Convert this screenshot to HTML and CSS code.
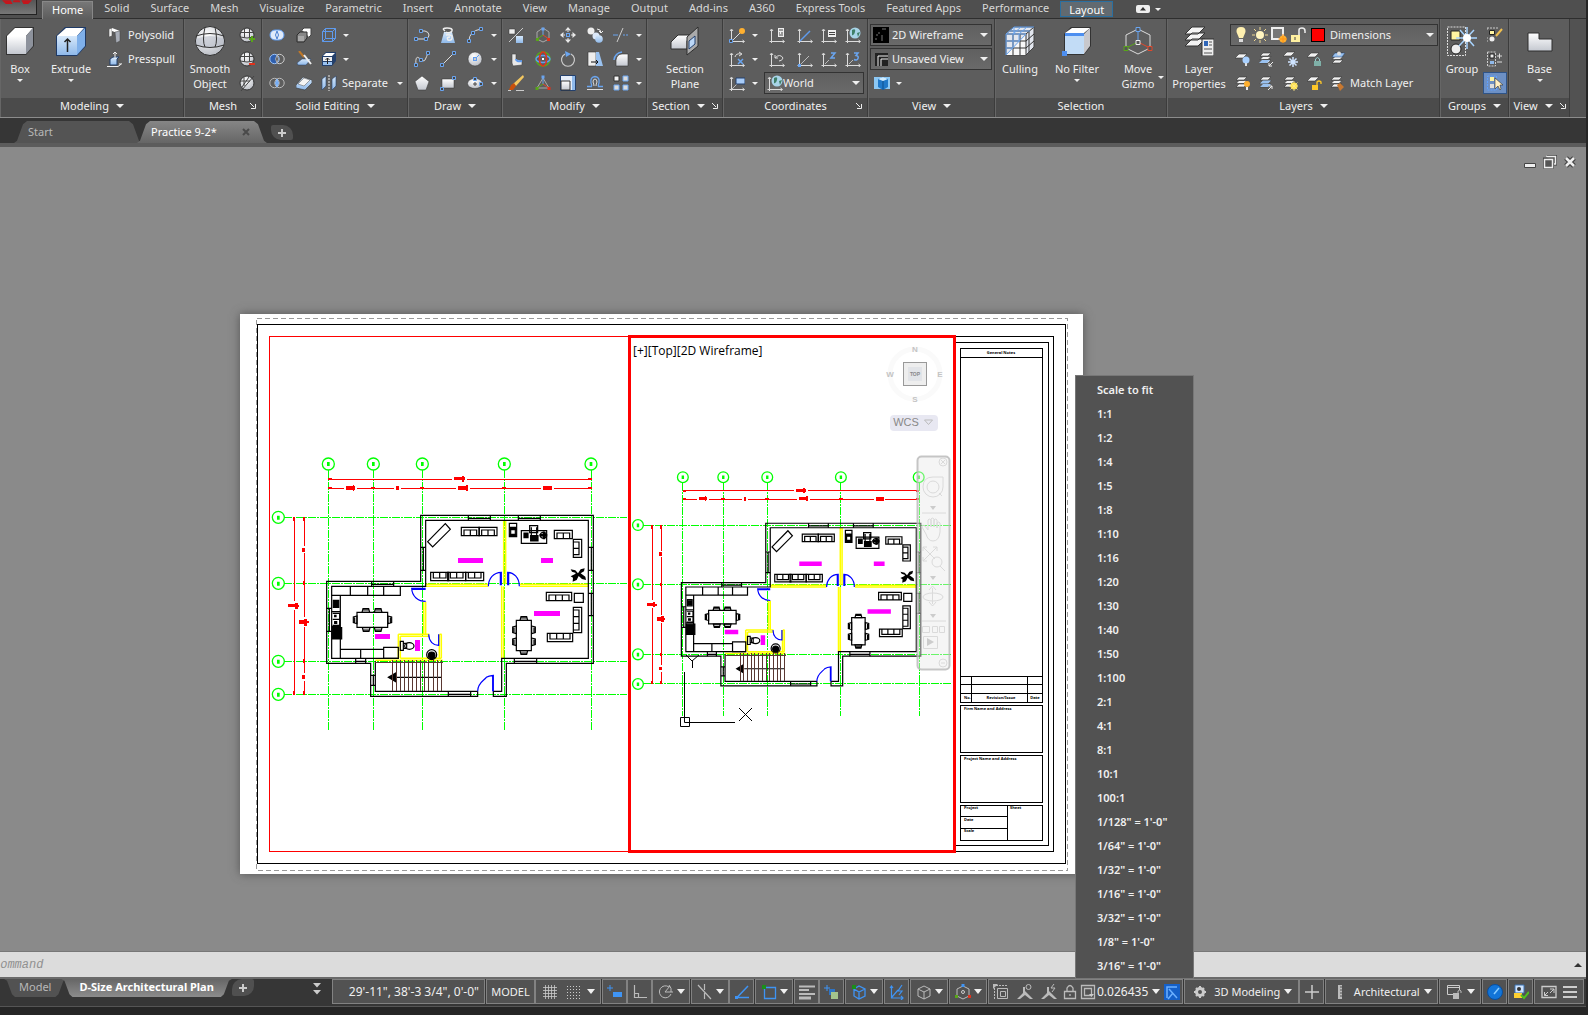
FILE: index.html
```html
<!DOCTYPE html>
<html lang="en">
<head>
<meta charset="utf-8">
<title>Practice 9-2</title>
<link rel="stylesheet" href="styles.css">
</head>
<body>
<svg class="defs" aria-hidden="true">
  <defs>
    <linearGradient id="gw" x1="0" y1="0" x2="0" y2="1"><stop offset="0" stop-color="#fff"/><stop offset="1" stop-color="#c4c8d0"/></linearGradient>
    <linearGradient id="gb" x1="0" y1="0" x2="0" y2="1"><stop offset="0" stop-color="#d6e8fa"/><stop offset="1" stop-color="#8fb9ea"/></linearGradient>
    <radialGradient id="gs" cx=".4" cy=".3" r=".8"><stop offset="0" stop-color="#fff"/><stop offset="1" stop-color="#b4b8c0"/></radialGradient>
    <g id="axes"><path d="M2.500 3V14.500H15M1 4l1.500-2L4 4M13.500 13l2 1.500-2 1.500M.5 14.500h2v1.500" fill="none" stroke="#dcdcdc"/></g>
    <g id="sheets"><path d="M5 2h8l-3 3H2zM5 5.500h8l-3 3H2zM5 9h8l-3 3H2z" fill="#f2f2f2" stroke="#333" stroke-width=".6"/></g>
    <g id="sofa2"><path d="M0 25V0H54V25H46V8H8V25ZM8 25H46M27 8V25M8 8H46"/></g>
    <g id="sofa3"><path d="M0 25V0H76V25H68V8H8V25ZM8 25H68M28 8V25M48 8V25"/></g>
    <g id="chair"><path d="M0 11L3 0H20L23 11ZM2 4H21"/></g>
    <g id="plan">
      <g class="grid-lines">
        <path d="M205-90V690M340-90V690M487-90V690M733-90V690M994-90V690M73 52H1101M73 250H1101M73 484H1101M73 583H1101"/>
      </g>
      <g class="bubbles">
        <circle cx="205" cy="-108" r="18"/><circle cx="340" cy="-108" r="18"/><circle cx="487" cy="-108" r="18"/><circle cx="733" cy="-108" r="18"/><circle cx="993" cy="-108" r="18"/>
        <circle cx="55" cy="52" r="18"/><circle cx="55" cy="250" r="18"/><circle cx="55" cy="484" r="18"/><circle cx="55" cy="583" r="18"/>
        <path class="dots" d="M201-114h8v12h-8zM336-114h8v12h-8zM483-114h8v12h-8zM729-114h8v12h-8zM989-114h8v12h-8zM51 47h8v12h-8zM51 245h8v12h-8zM51 479h8v12h-8zM51 578h8v12h-8z"/>
      </g>
      <g class="dims">
        <path d="M205-62H576M622-62H995M205-35H252M291-35H402M423-35H588M630-35H843M882-35H995M103 52V304M103 330V583M133 52V138M133 160V352M133 380V520M133 542V583"/>
        <path class="blob" d="M582-69h24v-3h6v3h3v9h-3v5h-6v-4h-24zM258-42h21v-3h4v3h3v11h-3v4h-4v-4h-21zM408-42h9v12h-9zM594-42h24v-3h6v18h-6v-4h-24zM849-42h27v12h-27zM84 312h21v-2h8v6h4v5h-4v6h-7v-6h-22zM126 143h9v13h-9zM117 360h15v-3h9v6h6v6h-6v8h-8v-6h-16zM126 525h9v12h-9z"/>
        <path class="blob" d="M205-65h12v6h-12zM985-65h10v6h-10zM205-38h12v6h-12zM334-38h12v6h-12zM481-38h12v6h-12zM727-38h12v6h-12zM985-38h10v6h-10zM100 52h6v12h-6zM100 572h6v12h-6zM130 52h6v12h-6zM130 244h6v12h-6zM130 478h6v12h-6zM130 572h6v12h-6z"/>
      </g>
      <g class="partitions">
        <path d="M731 61V253M737 61V253M497 253H685M497 259H685M780 253H985M780 259H985M725 259V475M731 259V475M491 305V403M497 305V403M415 403H508M421 409H508M415 403V475M421 409V475M538 403V475M544 403V475M346 481H548M421 475H544M539 403H545"/>
      </g>
      <g class="walls">
        <path d="M653 574V589H332V490H200V244H482V46H1000V490H739V589H700V574H725V475H985V61H497V259H215V475H415M346 484V574H653"/>
        <path d="M625 46V61M691 46V61M625 55H691M775 46V61M841 46V61M775 55H841M335 244V259M401 244V259M335 253H401M200 325H215M200 394H215M208 325V394M482 142H497M482 211H497M490 142V211M985 142H1000M985 211H1000M994 142V211M985 280H1000M985 347H1000M994 280V347M763 475V490M830 475V490M763 484H830M287 475V490M317 475V490M287 484H317M332 526H346M332 556H346M340 526V556M565 574V589M632 574V589M565 583H632"/>
        <path d="M215 286H421V259M271 259V286M323 259V286M371 259V286M241 286V475M241 448H371V475M302 448V475M371 442H415V475H371ZM215 335H241M215 379H241M220 301H236V322H220ZM218 340H239V376H218M218 358H239"/>
        <path class="solid" d="M222 305h12v14h-12zM224 346h4v4h-4zM224 365h6v5h-6zM217 383h28v34h-28z"/>
        <path d="M291 337H383V382H291ZM503 125L556 71L571 88L518 141ZM784 92H860V130H784ZM769 361H814V452H769ZM943 280H970V307H943Z"/>
        <use href="#chair" x="306" y="326"/><use href="#chair" x="343" y="326"/><use href="#chair" transform="translate(330 394) rotate(180)"/><use href="#chair" transform="translate(366 394) rotate(180)"/><use href="#chair" transform="translate(280 371) rotate(-90)"/><use href="#chair" transform="translate(395 348) rotate(90)"/>
        <use href="#chair" x="780" y="350"/><use href="#chair" transform="translate(803 463) rotate(180)"/><use href="#chair" transform="translate(758 401) rotate(-90)"/><use href="#chair" transform="translate(758 437) rotate(-90)"/><use href="#chair" transform="translate(826 378) rotate(90)"/><use href="#chair" transform="translate(826 414) rotate(90)"/>
        <use href="#sofa2" x="604" y="82"/><use href="#sofa2" x="657" y="82"/><use href="#sofa2" x="883" y="91"/><use href="#sofa2" transform="translate(965 118) rotate(90)"/>
        <use href="#sofa2" transform="translate(566 242) scale(-1 -1)"/><use href="#sofa2" transform="translate(617 242) scale(-1 -1)"/><use href="#sofa2" transform="translate(671 242) scale(-1 -1)"/>
        <use href="#sofa3" x="859" y="277"/><use href="#sofa3" transform="translate(965 322) rotate(90)"/><use href="#sofa3" transform="translate(938 425) rotate(180)"/>
        <path d="M748 70H770V110H748ZM752 84H766V104H752ZM809 77H833V98H809ZM814 82V116H830V82M421 424H430V451H421ZM430 430H440V445H430"/>
        <path class="solid" d="M750 82h18v7h-18zM750 103h18v6h-18zM792 99h12v14h-12zM812 107h22v16h-22zM850 96h4v20h-4zM840 104h20v4h-20z"/>
        <circle cx="850" cy="106" r="9"/><ellipse cx="448" cy="438" rx="14" ry="10"/><circle cx="515" cy="464" r="15"/><circle class="solid" cx="515" cy="466" r="10"/>
        <path class="solid leaf" d="M932 208l14 3 8 9 8-12 12-3-2 9-10 6 14 10 2 10-12-3-10-9-6 12-12 5 1-12-7-4 12-6 4-4-12-4z"/>
        <path d="M410 532H545"/><path class="solid" d="M385 532l22-13v26z"/>
      </g>
      <path class="stairs" d="M346 487H548M397 481V574M409 481V574M421 481V574M434 481V574M446 481V574M458 481V574M471 481V574M483 481V574M495 481V574M507 481V574M520 481V574M532 481V574M545 481V574"/>
      <path class="doors" d="M685 259C686 235 700 218 724 217V256M721 217V256M743 256V217C760 217 778 232 778 259M746 217V256M497 265H455C456 290 475 304 497 304M455 268H497M506 403C507 425 520 436 536 436V403M653 574C653 548 672 542 679 532Q686 527 700 526V574M698 526V574"/>
      <path class="tags" d="M594 174h75v15h-75zM843 174h36v15h-36zM822 333h78v15h-78zM345 402h45v15h-45zM465 420h15v33h-15z"/>
    </g>
  </defs>
</svg>

<header class="ribbon">
  <nav class="ribbon-tabs">
    <button class="app-button" aria-label="Application menu"><svg viewBox="0 0 37 14"><path d="M2 0h9l2 4H6zM14 0h6l1 2h-8zM22 0h11l-4 4h-5z" fill="#c4161c"/></svg></button>
    <button class="rtab current">Home</button><button class="rtab">Solid</button><button class="rtab">Surface</button><button class="rtab">Mesh</button><button class="rtab">Visualize</button><button class="rtab">Parametric</button><button class="rtab">Insert</button><button class="rtab">Annotate</button><button class="rtab">View</button><button class="rtab">Manage</button><button class="rtab">Output</button><button class="rtab">Add-ins</button><button class="rtab">A360</button><button class="rtab">Express Tools</button><button class="rtab">Featured Apps</button><button class="rtab">Performance</button><button class="rtab contextual">Layout</button>
    <button class="collapse" aria-label="Minimize ribbon"><svg width="14" height="8" viewBox="0 0 14 8"><rect width="14" height="8" rx="2" fill="#eee"/><path d="M4 5.500L7 2l3 3.500z" fill="#333"/></svg><i class="caret"></i></button>
  </nav>

  <div class="panels">
    <section class="panel modeling">
      <div class="tools">
        <button class="big"><svg viewBox="0 0 30 30"><path d="M1 10L10 1h19v19l-8 9H1z" fill="#333"/><path d="M2 10l8-8h18l-7 8z" fill="#fff"/><path d="M2 10h19v18H2z" fill="url(#gw)"/><path d="M21 10l7-8v18l-7 8z" fill="#8d929c"/></svg><span>Box</span><i class="caret"></i></button>
        <button class="big"><svg viewBox="0 0 30 30"><path d="M0 10L9 1h21v19l-9 10H0z" fill="#1f3a66"/><path d="M1 10l9-8h18l-7 8z" fill="#fff"/><path d="M1 10h20v19H1z" fill="url(#gb)"/><path d="M21 10l8-8v18l-8 9z" fill="#7fb0ea"/><path d="M11.500 26V14M8.500 16l3-3 3 3" fill="none" stroke="#222" stroke-width="1.500"/></svg><span>Extrude</span><i class="caret"></i></button>
        <div class="stack">
          <button class="wide"><svg viewBox="0 0 16 16"><path d="M2 2l3-1v8l-3 1z" fill="#eee" stroke="#444" stroke-width=".5"/><path d="M5 1l8 3v3L5 4z" fill="#fff"/><path d="M8 5l5-1v10l-4 2z" fill="#a9aeb8" stroke="#444" stroke-width=".5"/></svg>Polysolid</button>
          <button class="wide"><svg viewBox="0 0 16 16"><path d="M3 8l3-2h6l-2 2v6H3z" fill="url(#gb)" stroke="#24406c"/><path d="M8 8V1M6 3l2-2 2 2M0 15.500h11l4-3M13 12v2" fill="none" stroke="#f2f2f2"/></svg>Presspull</button>
        </div>
      </div>
      <h2>Modeling <i class="caret lg"></i></h2>
    </section>

    <section class="panel mesh">
      <div class="tools">
        <button class="big two"><svg viewBox="0 0 30 30"><circle cx="15" cy="15" r="14.500" fill="url(#gs)" stroke="#2e2e2e"/><path d="M1 13q14-6 28 0v6q-14 5-28 0z" fill="#b7bdc8" opacity=".6"/><path d="M1 10q14-5 28 0M1 19q14 5 28 0M10 1q-3 14 0 20M20 1q3 14 0 20" fill="none" stroke="#333"/></svg><span>Smooth<br>Object</span></button>
        <div class="rows one">
          <button class="ib" aria-label="Smooth more"><svg viewBox="0 0 16 16"><circle cx="8" cy="8" r="7" fill="url(#gs)" stroke="#333"/><path d="M1 5.500h14M1 10q7 2 14 0M5.500 1.500v9M10.500 1.500v9" fill="none" stroke="#444"/><path d="M13 9v6M10 12h6" stroke="#58a618" stroke-width="2"/></svg></button>
          <button class="ib" aria-label="Smooth less"><svg viewBox="0 0 16 16"><circle cx="8" cy="8" r="7" fill="url(#gs)" stroke="#333"/><path d="M1 5.500h14M1 10q7 2 14 0M5.500 1.500v9M10.500 1.500v9" fill="none" stroke="#444"/><path d="M10 13h6" stroke="#e0321c" stroke-width="2"/></svg></button>
          <button class="ib" aria-label="Refine mesh"><svg viewBox="0 0 16 16"><circle cx="8" cy="8" r="7" fill="url(#gs)" stroke="#333"/><path d="M5 2v9M10 2L3 12M1 6h10M15 1L2 16" fill="none" stroke="#444"/></svg></button>
        </div>
      </div>
      <h2>Mesh <svg class="launcher" viewBox="0 0 6 6"><path d="M0 0l4 4M5.500 1v4.500H1" stroke="#eee" fill="none"/></svg></h2>
    </section>

    <section class="panel editing">
      <div class="tools"><div class="rows">
        <button class="ib" aria-label="Union"><svg viewBox="0 0 16 16"><rect x="1" y="3" width="14" height="10" rx="5" fill="#dfeafa" stroke="#5f9bee"/><path d="M8 4q3 4 0 8q-3-4 0-8" fill="none" stroke="#4a7fd0"/></svg></button>
        <button class="ib" aria-label="Extract faces"><svg viewBox="0 0 16 16"><path d="M6 3l2-2h7v7l-2 2" fill="#fff" stroke="#444"/><path d="M1 8l3-3h7v6l-3 4H1z" fill="#888" stroke="#2e2e2e"/><path d="M2 9h6v5H2z" fill="#a8a8a8"/></svg></button>
        <button class="ib" aria-label="Extract edges"><svg viewBox="0 0 16 16"><path d="M1.500 4.500h10v10h-10zM1.500 4.500l3-3h10v10l-3 3M11.500 4.500l3-3M4.500 1.500v10M4.500 11.500h10M1.500 14.500l3-3" fill="none" stroke="#5f9bee"/></svg></button>
        <i class="caret"></i>
        <button class="ib" aria-label="Subtract"><svg viewBox="0 0 16 16"><circle cx="10.500" cy="8" r="4.700" fill="none" stroke="#ccc"/><circle cx="5.500" cy="8" r="4.700" fill="#2f5fae" stroke="#9cc4fa"/><path d="M8 4q3 4 0 8q-3-4 0-8" fill="#5d5d5d" stroke="#ccc" stroke-width=".7"/></svg></button>
        <button class="ib" aria-label="Slice"><svg viewBox="0 0 16 16"><path d="M1 12l5-4h9l-5 6H2z" fill="url(#gb)" stroke="#24406c" stroke-width=".5"/><path d="M3 0l5 6" stroke="#c07828" stroke-width="2"/><path d="M8 4l7 9" stroke="#eee" stroke-width="2"/></svg></button>
        <button class="ib" aria-label="Extrude faces"><svg viewBox="0 0 16 16"><path d="M1 5l4-4h10v9l-4 5H1z" fill="#24406c"/><path d="M2 5l3-3h9l-3 3z" fill="#fff"/><path d="M2 6h9v4H2z" fill="#eee"/><path d="M2 11h9v3H2z" fill="#9ac2f0"/><path d="M6.500 13V7M4.500 9l2-2 2 2" fill="none" stroke="#222"/></svg></button>
        <i class="caret"></i>
        <button class="ib" aria-label="Intersect"><svg viewBox="0 0 16 16"><circle cx="5.500" cy="8" r="4.700" fill="none" stroke="#bbb"/><circle cx="10.500" cy="8" r="4.700" fill="none" stroke="#bbb"/><path d="M8 4q3 4 0 8q-3-4 0-8" fill="#6fa8f4" stroke="#8dbcf8"/></svg></button>
        <button class="ib" aria-label="Thicken"><svg viewBox="0 0 16 16"><path d="M0 10l7-8 9 3v3l-7 7-9-2z" fill="url(#gb)" stroke="#333" stroke-width=".6"/><path d="M2 9l6-6 6 2-6 6z" fill="#f4f4f4" stroke="#555" stroke-width=".5"/></svg></button>
        <button class="sep wide"><svg viewBox="0 0 16 16"><path d="M1 4l4-3v10l-4 4zM11 4l4-3v10l-4 4z" fill="url(#gb)" stroke="#24406c" stroke-width=".6"/><path d="M8 0v16" stroke="#eee" stroke-dasharray="2 1"/></svg>Separate</button>
        <i class="caret"></i>
      </div></div>
      <h2>Solid Editing <i class="caret lg"></i></h2>
    </section>

    <section class="panel draw">
      <div class="tools"><div class="rows">
        <button class="ib" aria-label="Polyline"><svg viewBox="0 0 16 16"><path d="M3 12h9q3-1 3-4t-4-4H7" fill="none" stroke="#dcdcdc"/><path d="M.5 10.500h3v3h-3zM10.500 10.500h3v3h-3zM5.500 2.500h3v3h-3z" fill="#444" stroke="#6aa5f0"/></svg></button>
        <button class="ib" aria-label="Helix"><svg viewBox="0 0 16 16"><path d="M4 5h8l3 11H1z" fill="url(#gb)"/><path d="M5 4q-4-3 2-3t5 3q-3 3-6 1M6 8q3-1 6 1 1 5-4 4-2-3 2-3" fill="none" stroke="#eee" stroke-width="1.500"/></svg></button>
        <button class="ib" aria-label="Arc"><svg viewBox="0 0 16 16"><path d="M2 14Q2 4 14 2" fill="none" stroke="#dcdcdc"/><path d="M.5 12.500h3v3h-3zM4.500 4.500h3v3h-3zM12.500.5h3v3h-3z" fill="#444" stroke="#6aa5f0"/></svg></button>
        <i class="caret"></i>
        <button class="ib" aria-label="Spline"><svg viewBox="0 0 16 16"><path d="M2 14Q1 4 5 7t5 3 4-8" fill="none" stroke="#dcdcdc"/><path d="M.5 12.500h3v3h-3zM5.500 7.500h3v3h-3zM12.500.5h3v3h-3z" fill="#444" stroke="#6aa5f0"/></svg></button>
        <button class="ib" aria-label="Line"><svg viewBox="0 0 16 16"><path d="M2 14L14 2" stroke="#dcdcdc"/><path d="M.5 12.500h3v3h-3zM12.500.5h3v3h-3z" fill="#444" stroke="#6aa5f0"/></svg></button>
        <button class="ib" aria-label="Circle"><svg viewBox="0 0 16 16"><circle cx="8" cy="8" r="7" fill="url(#gs)" stroke="#333" stroke-width=".5"/><path d="M8 8l4-4" stroke="#5f9bee"/><rect x="6.500" y="6.500" width="3" height="3" fill="#ccc" stroke="#5f9bee"/></svg></button>
        <i class="caret"></i>
        <button class="ib" aria-label="Polygon"><svg viewBox="0 0 16 16"><path d="M8 1l7 5.500L12 15H4L1 6.500z" fill="url(#gw)" stroke="#333" stroke-width=".5"/></svg></button>
        <button class="ib" aria-label="Rectangle"><svg viewBox="0 0 16 16"><rect x="2" y="4" width="12" height="9" fill="url(#gw)" stroke="#333" stroke-width=".5"/><path d="M.5 12.500h3v3h-3zM12.500 1.500h3v3h-3z" fill="#444" stroke="#6aa5f0"/></svg></button>
        <button class="ib" aria-label="Ellipse"><svg viewBox="0 0 16 16"><ellipse cx="8" cy="8.500" rx="7.500" ry="5" fill="url(#gs)" stroke="#333" stroke-width=".5"/><path d="M6.500 2.500h3v3h-3zM12.500 7.500h3v3h-3z" fill="#444" stroke="#6aa5f0"/><path d="M8 7v4M6 9h4" stroke="#444"/></svg></button>
        <i class="caret"></i>
      </div></div>
      <h2>Draw <i class="caret lg"></i></h2>
    </section>

    <section class="panel modify">
      <div class="tools"><div class="rows">
        <button class="ib" aria-label="3D align"><svg viewBox="0 0 16 16"><path d="M1 2h6v5H1z" fill="#eee" stroke="#333" stroke-width=".5"/><path d="M15 1L1 15" stroke="#ccc"/><path d="M8 9h7v7H8z" fill="url(#gb)"/></svg></button>
        <button class="ib" aria-label="3D move"><svg viewBox="0 0 16 16"><path d="M8 1l6 4v7l-6 3-6-3V5z" fill="none" stroke="#aaa"/><path d="M8 2v6" stroke="#6aa5f0"/><path d="M8 8l6 4" stroke="#e0482c"/><path d="M8 8l-6 4" stroke="#58a618"/><path d="M6.500.5h3v3h-3z" fill="#6aa5f0"/><path d="M12 11h3v3h-3z" fill="#e0321c"/><path d="M1 11h3v3H1z" fill="#58a618"/></svg></button>
        <button class="ib" aria-label="Move"><svg viewBox="0 0 16 16"><path d="M8 0l3 3.500H5zM8 16l3-3.500H5zM0 8l3.500-3v6zM16 8l-3.500-3v6zM7.500 3v2h1V3zM7.500 11v2h1v-2zM3 7.500v1h2v-1zM11 7.500v1h2v-1z" fill="#e8e8e8"/><rect x="6.500" y="6.500" width="3" height="3" fill="none" stroke="#6aa5f0"/></svg></button>
        <button class="ib" aria-label="Copy"><svg viewBox="0 0 16 16"><circle cx="4" cy="4" r="3.500" fill="#eee"/><circle cx="9" cy="9" r="3.500" fill="#dce8f8"/><circle cx="12" cy="12" r="3.800" fill="url(#gb)"/><path d="M10 2q4 0 4 4M12 4l2 2 2-2" fill="none" stroke="#eee"/></svg></button>
        <button class="ib" aria-label="Trim"><svg viewBox="0 0 16 16"><path d="M0 8h5" stroke="#6aa5f0"/><path d="M10 8h6" stroke="#6aa5f0" stroke-dasharray="2 1"/><path d="M10 1L4 15" stroke="#ccc"/></svg></button>
        <i class="caret"></i>
        <button class="ib" aria-label="Fillet edge"><svg viewBox="0 0 16 16"><path d="M4 3h4v5l6 2v4l-9 1-1-3z" fill="#e8e8e8" stroke="#444" stroke-width=".6"/><path d="M8 8q0 3 6 2" stroke="#5f9bee" stroke-width="2" fill="none"/></svg></button>
        <button class="ib" aria-label="3D rotate"><svg viewBox="0 0 16 16"><circle cx="8" cy="8" r="7" fill="none" stroke="#58a618" stroke-width="1.500"/><ellipse cx="8" cy="8" rx="7" ry="3.500" fill="none" stroke="#5f9bee" stroke-width="1.500"/><ellipse cx="8" cy="8" rx="3.500" ry="7" fill="none" stroke="#e0321c" stroke-width="1.500"/><path d="M7 7h2v2H7z" fill="#fff"/></svg></button>
        <button class="ib" aria-label="Rotate"><svg viewBox="0 0 16 16"><path d="M5 3a6.500 6.500 0 1 0 6 0" fill="none" stroke="#ccc" stroke-width="1.200"/><path d="M5 0l6 3-5 3z" fill="#6aa5f0"/></svg></button>
        <button class="ib" aria-label="Stretch"><svg viewBox="0 0 16 16"><path d="M1 1h8v14H1z" fill="#eee" stroke="#333" stroke-width=".6"/><path d="M9 1h3l4 14H9z" fill="#9ac2f0"/><path d="M4 11h7M9 9l2 2-2 2" fill="none" stroke="#111"/></svg></button>
        <button class="ib" aria-label="Fillet"><svg viewBox="0 0 16 16"><path d="M3 15V9q1-6 6-6h6v12z" fill="url(#gw)" stroke="#333" stroke-width=".6"/><path d="M1 9Q2 2 9 1" fill="none" stroke="#6aa5f0" stroke-width="1.500"/></svg></button>
        <i class="caret"></i>
        <button class="ib" aria-label="Erase"><svg viewBox="0 0 16 16"><path d="M15 0l1 2-8 9-3-2z" fill="#f4c860"/><path d="M3 10l3-2 2 3-3 4H1z" fill="#c8500c"/><path d="M8 15.500h8M0 15.500h3" stroke="#ccc"/></svg></button>
        <button class="ib" aria-label="3D scale"><svg viewBox="0 0 16 16"><path d="M8 3L2 13h12z" fill="none" stroke="#aaa"/><path d="M8 3v6" stroke="#6aa5f0"/><path d="M8 9l-6 4" stroke="#58a618"/><path d="M8 9l6 4" stroke="#e0482c"/><path d="M6.500.5h3v3h-3z" fill="#6aa5f0"/><path d="M12.500 12h3v3h-3z" fill="#e0321c"/><path d="M.5 12h3v3h-3z" fill="#58a618"/></svg></button>
        <button class="ib" aria-label="Scale"><svg viewBox="0 0 16 16"><path d="M.5.5h15v15H.5z" fill="#e6eefa" stroke="#24406c"/><path d="M12 1h3v14h-3z" fill="#8fb9ea"/><path d="M1 6h9v9H1z" fill="url(#gw)" stroke="#333"/></svg></button>
        <button class="ib" aria-label="Offset"><svg viewBox="0 0 16 16"><path d="M0 11.500h4.500Q5 10 4 8 3 2 8 1.500q5 .5 4 6.500-1 2-.5 3.500H16" fill="none" stroke="#6aa5f0" stroke-width="1.300"/><path d="M0 14.500h16M7 11q0-2-1-4 0-3 2-3t2 3q-1 2-1 4" fill="none" stroke="#dcdcdc"/></svg></button>
        <button class="ib" aria-label="Array"><svg viewBox="0 0 16 16"><path d="M1 1h5v5H1z" fill="#f4f4f4" stroke="#333"/><path d="M10 1h5v5h-5zM1 10h5v5H1zM10 10h5v5h-5z" fill="#dcdcdc" stroke="#6aa5f0"/></svg></button>
        <i class="caret"></i>
      </div></div>
      <h2>Modify <i class="caret lg"></i></h2>
    </section>

    <section class="panel section">
      <div class="tools">
        <button class="big two"><svg viewBox="0 0 30 30"><path d="M1 16l7-7h13l-4 6v8H1z" fill="url(#gw)" stroke="#2e2e2e"/><path d="M17 11L28 1v19L17 29z" fill="#aaa" stroke="#2e2e2e"/><path d="M19 15l6-5v8l-6 5z" fill="#bcd8f8" stroke="#24406c"/></svg><span>Section<br>Plane</span></button>
      </div>
      <h2>Section <i class="caret lg"></i><svg class="launcher inline" viewBox="0 0 6 6"><path d="M0 0l4 4M5.500 1v4.500H1" stroke="#eee" fill="none"/></svg></h2>
    </section>

    <section class="panel coords">
      <div class="tools"><div class="rows">
        <button class="ib" aria-label="UCS"><svg viewBox="0 0 16 16"><use href="#axes"/><path d="M4 13l8-8" stroke="#dcdcdc"/><circle cx="13" cy="4" r="3" fill="#ffb030"/><path d="M.5 12.500h3v3h-3z" fill="#444" stroke="#6aa5f0"/></svg></button><i class="caret"></i>
        <button class="ib" aria-label="UCS settings"><svg viewBox="0 0 16 16"><use href="#axes"/><path d="M9 1h6v9H9z" fill="#eee"/><path d="M10 3h4M10 6h1M12 6h2M10 8h4" stroke="#444"/></svg></button>
        <button class="ib" aria-label="UCS icon"><svg viewBox="0 0 16 16"><use href="#axes"/><path d="M3 14L13 4" stroke="#5f9bee" stroke-width="1.500"/></svg></button>
        <button class="ib" aria-label="Named UCS"><svg viewBox="0 0 16 16"><use href="#axes"/><path d="M7 3h8v7H7z" fill="#eee"/><path d="M8 5.500h6M8 7.500h6" stroke="#444"/></svg></button>
        <button class="ib" aria-label="World UCS"><svg viewBox="0 0 16 16"><use href="#axes"/><circle cx="10" cy="6" r="5.500" fill="#a8d4e8"/><path d="M7 3q4-2 3 2t-3 3zM12 6l3-1-2 5z" fill="#3f7f68"/></svg></button>
        <button class="ib" aria-label="Rotate UCS"><svg viewBox="0 0 16 16"><use href="#axes"/><path d="M6 6q1-4 6-3M10 1l3 2-3 2" fill="none" stroke="#dcdcdc"/><path d="M9 8l5 5M14 8l-5 5" stroke="#6aa5f0" stroke-width="1.500"/></svg></button><i class="caret"></i>
        <button class="ib" aria-label="Previous UCS"><svg viewBox="0 0 16 16"><use href="#axes"/><path d="M6 4v3h3M6 7q5-5 8 0-1 3-4 3" fill="none" stroke="#dcdcdc"/></svg></button>
        <button class="ib" aria-label="UCS origin"><svg viewBox="0 0 16 16"><use href="#axes"/><path d="M3 14l9-9" stroke="#bbb"/><path d="M1 13h3v3H1z" fill="#6aa5f0"/></svg></button>
        <button class="ib" aria-label="Z axis vector"><svg viewBox="0 0 16 16"><use href="#axes"/><path d="M4 13l4-4" stroke="#bbb"/><path d="M10 2h4l-4 5h4" fill="none" stroke="#6aa5f0" stroke-width="1.500"/></svg></button>
        <button class="ib" aria-label="Three point UCS"><svg viewBox="0 0 16 16"><use href="#axes"/><path d="M4 13l4-4" stroke="#bbb"/><path d="M9 2h4l-2 2.500q3 .5 2 3t-4 1" fill="none" stroke="#6aa5f0" stroke-width="1.500"/></svg></button>
        <button class="ib" aria-label="View UCS"><svg viewBox="0 0 16 16"><use href="#axes"/><path d="M3 14l5-5" stroke="#bbb"/><path d="M7 3h9v6H7z" fill="#a8ccf8" stroke="#24406c"/></svg></button><i class="caret"></i>
        <label class="drop world"><svg viewBox="0 0 16 16"><use href="#axes"/><circle cx="10" cy="6" r="5.500" fill="#a8d4e8"/><path d="M7 3q4-2 3 2t-3 3zM12 6l3-1-2 5z" fill="#3f7f68"/></svg><select aria-label="Coordinate system"><option>World</option></select><i class="caret lg"></i></label>
      </div></div>
      <h2>Coordinates <svg class="launcher" viewBox="0 0 6 6"><path d="M0 0l4 4M5.500 1v4.500H1" stroke="#eee" fill="none"/></svg></h2>
    </section>

    <section class="panel views">
      <div class="tools"><div class="rows full">
        <label class="drop"><svg viewBox="0 0 16 16"><path d="M0 0h16v16H0z" fill="#000"/><path d="M9 14V8M9 2h4M3 8h2M6 5v2M2 12h2" stroke="#777" fill="none"/></svg><select aria-label="Visual style"><option>2D Wireframe</option></select><i class="caret lg"></i></label>
        <label class="drop"><svg viewBox="0 0 16 16"><path d="M2 2h13v13H2z" fill="#222"/><path d="M5 15V5h10M8 15V8h7" stroke="#eee" fill="none"/></svg><select aria-label="Saved view"><option>Unsaved View</option></select><i class="caret lg"></i></label>
        <div class="pair"><button class="ib" aria-label="Viewport"><svg viewBox="0 0 16 16"><path d="M0 2h16v12H0z" fill="#8cc8f4"/><path d="M4 4l5-2 5 2v8l-5 3-5-3z" fill="#1f78c8"/><path d="M4 4l5 2 5-2-5-2z" fill="#d0ecff"/><path d="M9 6v9" stroke="#0d4f8c"/></svg></button><i class="caret"></i></div>
      </div></div>
      <h2>View <i class="caret lg"></i></h2>
    </section>

    <section class="panel selection">
      <div class="tools">
        <button class="big"><svg viewBox="0 0 30 30"><path d="M1 8l8-7h20v20l-8 8H1z" fill="#e2e6ee" stroke="#444"/><path d="M1 29L21 9v20z" fill="#f8f8f8"/><path d="M1 8h20v21M8 8v21M15 8v21M1 15h20M1 22h20M21 8l8-7M21 15l8-7M21 22l8-7M24 6v20M5 5h20" fill="none" stroke="#333"/><path d="M1 8l8-7h20M1 8v21L21 8zM8 8v14M14 8v7M1 15h14M1 22h7M9 1v7M5 5h20M16 1l-8 7M22 1l-8 7" fill="none" stroke="#6aa5f0"/></svg><span>Culling</span></button>
        <button class="big"><svg viewBox="0 0 30 30"><path d="M2 8l7-7h20v19l-7 9H2z" fill="#333"/><path d="M3 7l7-5h18l-6 5z" fill="#fff"/><path d="M3 7h19v3H3z" fill="#4d8ff0"/><path d="M3 10h19v18H3z" fill="#c2dcf6"/><path d="M22 8l6-6v18l-6 8z" fill="#c8c8cc"/><path d="M0 25h5v5H0z" fill="#4d8ff0"/></svg><span>No Filter</span><i class="caret"></i></button>
        <button class="big two gizmo"><svg viewBox="0 0 30 30"><path d="M15 3l12 6v13l-12 6-12-6V9z" fill="none" stroke="#dcdcdc"/><path d="M15 16V5" stroke="#6aa5f0"/><path d="M15 16l12 6" stroke="#e0482c"/><path d="M15 16L3 22" stroke="#58a618"/><path d="M13 1.500h4v4h-4z" fill="#555" stroke="#6aa5f0"/><path d="M13 14.500h4v4h-4z" fill="#555" stroke="#eee"/><path d="M25 20.500h4v4h-4z" fill="#555" stroke="#e0482c"/><path d="M1 20.500h4v4H1z" fill="#555" stroke="#58a618"/></svg><span>Move<br>Gizmo</span><i class="caret"></i></button>
      </div>
      <h2>Selection</h2>
    </section>

    <section class="panel layers">
      <div class="tools">
        <button class="big two"><svg viewBox="0 0 30 30"><path d="M8 1h13l-7 7H1zM8 7h13l-7 7H1zM8 13h13l-7 7H1z" fill="#f4f4f4" stroke="#333"/><path d="M18 13h12v17H18z" fill="#eee" stroke="#333"/><path d="M20 15h4v5h-4z" fill="#2f66b8"/><path d="M25 16h3M25 19h3M20 23h8M20 27h8" stroke="#555"/></svg><span>Layer<br>Properties</span></button>
        <div class="rows">
          <label class="drop layer-drop">
            <svg viewBox="0 0 16 16"><path d="M8 0q5 0 4.500 5L10 11H6L3.500 5Q3 0 8 0z" fill="#fff0b0"/><path d="M6 12h4v3H6z" fill="#ddd"/></svg>
            <svg viewBox="0 0 16 16"><circle cx="8" cy="8" r="4" fill="#fff4c0"/><path d="M8 0v3M8 13v3M0 8h3M13 8h3M2 2l2 2M12 12l2 2M14 2l-2 2M2 14l2-2" stroke="#f0d890"/></svg>
            <svg viewBox="0 0 16 16"><path d="M1 1h11v11H1z" fill="#777" stroke="#eee" stroke-width="2"/><circle cx="12" cy="12" r="3.500" fill="#ffb030"/><path d="M12 7v9M7.500 12H16" stroke="#ff9010"/></svg>
            <svg viewBox="0 0 16 16"><path d="M1 8h9v7H1z" fill="#fff0a0"/><path d="M9 8V3q0-2 3-2t3 3v2" fill="none" stroke="#eee" stroke-width="1.500"/><path d="M5 10v3" stroke="#444"/></svg>
            <b class="swatch"></b><select aria-label="Layer"><option>Dimensions</option></select><i class="caret lg"></i></label>
          <button class="ib" aria-label="Layer off"><svg viewBox="0 0 16 16"><path d="M5 3h8l-4 4H1z" fill="#f2f2f2" stroke="#333" stroke-width=".6"/><circle cx="12" cy="9" r="3.500" fill="#a8d0ff"/><path d="M11 12h2v3h-2z" fill="#ddd"/></svg></button>
          <button class="ib" aria-label="Isolate layer"><svg viewBox="0 0 16 16"><use href="#sheets"/><path d="M4 9h8l-3 3H1z" fill="#9ac2f0"/><path d="M15 11l-4 4M11 12v3h3" fill="none" stroke="#eee"/></svg></button>
          <button class="ib" aria-label="Freeze layer"><svg viewBox="0 0 16 16"><path d="M5 1h8L9 5H1z" fill="#f2f2f2" stroke="#333" stroke-width=".6"/><path d="M11 6v10M6 11h10M7.500 7.500l7 7M14.500 7.500l-7 7" stroke="#cfe4ff" stroke-width="1.500"/></svg></button>
          <button class="ib" aria-label="Lock layer"><svg viewBox="0 0 16 16"><path d="M5 2h8L9 6H1z" fill="#f2f2f2" stroke="#333" stroke-width=".6"/><path d="M8 10h7v5H8z" fill="#7fb0a8"/><path d="M9.500 10V8q2-3 4 0v2" fill="none" stroke="#9cc"/></svg></button>
          <button class="ib" aria-label="Make current"><svg viewBox="0 0 16 16"><use href="#sheets"/><path d="M5 2h10l-3 4H2z" fill="#9ac2f0" stroke="#24406c" stroke-width=".5"/><circle cx="9" cy="2.500" r="2" fill="#ddd"/></svg></button>
          <button class="ib r3" aria-label="Turn all layers on"><svg viewBox="0 0 16 16"><use href="#sheets"/><circle cx="13" cy="9" r="3" fill="#ffb030"/><path d="M12 12h2v3h-2z" fill="#eee"/></svg></button>
          <button class="ib" aria-label="Unisolate"><svg viewBox="0 0 16 16"><use href="#sheets"/><path d="M5 5.500h8l-3 3H2zM5 9h8l-3 3H2z" fill="#9ac2f0"/><path d="M10 15l4-4M11 11h3v3" fill="none" stroke="#eee"/></svg></button>
          <button class="ib" aria-label="Thaw all layers"><svg viewBox="0 0 16 16"><use href="#sheets"/><circle cx="12" cy="11" r="3.500" fill="#ffe040"/><path d="M12 6v10M7 11h9M8.500 7.500l7 7M15.500 7.500l-7 7" stroke="#ffe98a" stroke-width=".8"/></svg></button>
          <button class="ib" aria-label="Unlock layer"><svg viewBox="0 0 16 16"><path d="M5 2h8L9 6H1z" fill="#f2f2f2" stroke="#333" stroke-width=".6"/><path d="M6 10h6v5H6z" fill="#ffc828"/><path d="M11 10V7q2-2 4 0v2" fill="none" stroke="#ffc828" stroke-width="1.300"/></svg></button>
          <button class="match wide"><svg viewBox="0 0 16 16"><use href="#sheets"/><path d="M8 10l3-2 4 4-4 4z" fill="#c87830"/></svg>Match Layer</button>
        </div>
      </div>
      <h2>Layers <i class="caret lg"></i></h2>
    </section>

    <section class="panel groups">
      <div class="tools">
        <button class="big"><svg viewBox="0 0 30 30"><path d="M.5 1h18v28.500h-18z" fill="none" stroke="#ddd" stroke-dasharray="2 1"/><path d="M4 5h9v9H4z" fill="#fff4a0" stroke="#222"/><circle cx="9" cy="23" r="5" fill="#eee" stroke="#222"/><path d="M20 1v22M9 12h21M13 4l14 16M27 4L12 20" stroke="#a8d4ff" stroke-width="1.500"/><circle cx="20" cy="12" r="4" fill="#fff"/></svg><span>Group</span></button>
        <div class="rows one">
          <button class="ib" aria-label="Ungroup"><svg viewBox="0 0 16 16"><path d="M0 1h12M0 1v3M0 15V9" stroke="#ccc" stroke-dasharray="2 1"/><path d="M2.500 3.500h5v4h-5z" fill="#fff4a0" stroke="#222"/><circle cx="5" cy="12" r="2.500" fill="#eee"/><path d="M15 2l-6 7" stroke="#f0c050" stroke-width="2"/></svg></button>
          <button class="ib" aria-label="Group edit"><svg viewBox="0 0 16 16"><path d="M.5 1h8v14h-8z" fill="none" stroke="#ccc" stroke-dasharray="2 1"/><path d="M3 3h4v4H3z" fill="#eee" stroke="#222"/><path d="M3 10h4v3H3z" fill="#8fb9ea"/><path d="M10 5h5M12.500 2.500v5M10 11h5" stroke="#ddd"/></svg></button>
          <button class="ib on" aria-label="Group selection"><svg viewBox="0 0 16 16"><path d="M.5 1h9v14h-9z" fill="none" stroke="#5fa0ff" stroke-dasharray="2 1"/><path d="M3 2h4v4H3z" fill="#fff4a0"/><path d="M3 9h4v4H3z" fill="#ddd"/><path d="M8 3v11l3-3 2 4 1-1-1-4h3z" fill="#ffeec0" stroke="#333" stroke-width=".6"/></svg></button>
        </div>
      </div>
      <h2>Groups <i class="caret lg"></i></h2>
    </section>

    <section class="panel base">
      <div class="tools">
        <button class="big"><svg viewBox="0 0 30 30"><path d="M3 7h11v6h13v12H3z" fill="url(#gw)" stroke="#2e2e2e"/></svg><span>Base</span><i class="caret"></i></button>
      </div>
      <h2>View <i class="caret lg"></i><svg class="launcher inline" viewBox="0 0 6 6"><path d="M0 0l4 4M5.500 1v4.500H1" stroke="#eee" fill="none"/></svg></h2>
    </section>
  </div>
</header>

<nav class="file-tabs">
  <button class="ftab">Start</button>
  <button class="ftab active">Practice 9-2*<svg viewBox="0 0 8 8"><path d="M1 1l6 6M7 1L1 7" stroke="#4a4a4a" stroke-width="2"/></svg></button>
  <button class="fplus" aria-label="New drawing"><svg viewBox="0 0 8 8"><path d="M4 0v8M0 4h8" stroke="#ccc" stroke-width="2"/></svg></button>
</nav>

<main class="workspace">
  <div class="window-controls">
    <button aria-label="Minimize"><svg viewBox="0 0 14 14"><path d="M1.500 8.500h11v4h-11z" fill="#eee" stroke="#444"/></svg></button>
    <button aria-label="Restore"><svg viewBox="0 0 14 14"><path d="M4 1h9v8h-3M1.500 4h8v8h-8z" fill="none" stroke="#444" stroke-width="3"/><path d="M4 2V1.500h8.500V9H11M1.500 4.500h8v8h-8z" fill="#555" stroke="#eee" stroke-width="1.500"/></svg></button>
    <button aria-label="Close"><svg viewBox="0 0 14 14"><path d="M3 3l8 8M11 3l-8 8" stroke="#444" stroke-width="5"/><path d="M3 3l8 8M11 3l-8 8" stroke="#eee" stroke-width="2.500"/></svg></button>
  </div>

  <svg class="sheet" viewBox="240 314 843 560" role="img" aria-label="Architectural plan sheet">
    <rect x="240" y="314" width="843" height="560" fill="#fff"/>
    <g class="frame">
      <rect class="margin" x="256.500" y="318.500" width="811" height="552"/>
      <rect x="257.500" y="324.500" width="808" height="539"/>
      <path d="M955 336.500H1053.500V851.500H955M955 342.500H1048.500V845.500H955M960.500 348.500H1042.500V702.500H960.500ZM960.500 357.500H1042.500M960.500 676.500H1042.500M960.500 684.500H1042.500M960.500 693.500H1042.500M971.500 676.500V702.500M1027.500 676.500V702.500M960.500 705.500H1042.500V752.500H960.500ZM960.500 755.500H1042.500V802.500H960.500ZM960.500 805.500H1042.500V840.500H960.500ZM1007.500 805.500V840.500M960.500 816.500H1007.500M960.500 828.500H1007.500"/>
    </g>
    <g class="notes">
      <text x="1001" y="354" text-anchor="middle">General  Notes</text>
      <text x="964" y="699">No.</text><text x="1001" y="699" text-anchor="middle">Revision/Issue</text><text x="1035" y="699" text-anchor="middle">Date</text>
      <text x="964" y="710">Firm Name and Address</text><text x="964" y="760">Project Name and Address</text>
      <text x="964" y="809">Project</text><text x="964" y="821">Date</text><text x="964" y="832">Scale</text><text x="1010" y="809">Sheet</text>
    </g>
    <rect class="vp" x="269.500" y="336.500" width="360" height="515"/>
    <use href="#plan" transform="translate(260 500) scale(.33333)"/>
    <use href="#plan" transform="translate(621.500 509.500) scale(.2993)"/>
    <path class="ucs" d="M684.500 672V722.500H735M680.500 717.500h9v9h-9zM739 708l13 13M752 708l-13 13M686 655l6 6 7-6M692.500 661v7"/>
    <rect class="vp current" x="629.500" y="336.500" width="325" height="515"/>
    <text class="vp-label" x="633" y="355">[+][Top][2D Wireframe]</text>
    <g class="cube">
      <circle cx="915" cy="374" r="25"/>
      <rect x="903.500" y="362.500" width="23" height="23"/><rect class="inner" x="908" y="367" width="14" height="14"/>
      <text class="top" x="915" y="376">TOP</text>
      <text x="915" y="352">N</text><text x="915" y="402">S</text><text x="890" y="377">W</text><text x="940" y="377">E</text>
      <rect class="pill" x="890" y="415" width="48" height="16" rx="4"/><text class="wcs" x="906" y="426">WCS</text><path d="M924.500 420h8l-4 4.500z"/>
    </g>
    <g class="navbar">
      <rect x="917.500" y="456.500" width="32" height="213" rx="4"/>
      <circle cx="943" cy="462" r="4"/><path d="M941 460l4 4M945 460l-4 4M922 513H946M922 621H946"/>
      <path d="M923 487q0-10 10-10h10v10a10 10 0 0 1-20 0zM939 493l3 3"/><circle cx="933" cy="487" r="6"/>
      <path d="M926 534l-4-7q0-3 3-1l3 4v-10q1-2 3 0v7-8q1-2 3 0v8-7q2-2 3 0v8-5q2-2 3 0v9q-1 9-7 9-5 0-7-7z"/>
      <path d="M923 547l12 12M937 547l-14 14M923 551v-4h4M933 547h4v4M923 557v4h4M940 566l5 5"/><circle cx="937" cy="562" r="5"/>
      <path d="M932.500 588v16M929 590l3.500-4 3.500 4M929 602l3.500 4 3.500-4"/><ellipse cx="933" cy="597" rx="10" ry="4"/>
      <path d="M922.500 626.500h7v6h-7zM932.500 626.500h5v6h-5zM939.500 626.500h5v6h-5zM923.500 636.500h14v12h-14z"/><path class="fill" d="M927 638v8l7-4zM930 506h6l-3 4zM930 576h6l-3 4zM930 614h6l-3 4z"/>
      <circle cx="943" cy="663" r="4"/><path d="M941 663h4"/>
    </g>
  </svg>
</main>

<div class="command"><input aria-label="Command line" placeholder="command"><i class="caret up"></i></div>

<footer class="bottom">
  <nav class="layout-tabs">
    <button class="ltab">Model</button>
    <button class="ltab active">D-Size Architectural Plan</button>
    <button class="lplus" aria-label="New layout"><svg viewBox="0 0 8 8"><path d="M4 0v8M0 4h8" stroke="#ccc" stroke-width="2"/></svg></button>
  </nav>
  <svg class="chevrons" viewBox="0 0 8 12"><path d="M0 0h8L4 4.500zM0 7h8l-4 4.500z" fill="#ccc"/></svg>
  <div class="status">
    <div class="seg coord">29'-11", 38'-3 3/4", 0'-0"</div>
    <button class="seg model">MODEL</button>
    <div class="seg w64">
      <button class="ib" aria-label="Grid"><svg viewBox="0 0 16 16"><path d="M3.500 1v14M6.500 1v14M9.500 1v14M12.500 1v14M1 3.500h14M1 6.500h14M1 9.500h14M1 12.500h14" stroke="#ccc" stroke-width=".8"/></svg></button>
      <button class="ib" aria-label="Snap"><svg viewBox="0 0 16 16"><path d="M2 2.500h13M2 5.500h13M2 8.500h13M2 11.500h13M2 14.500h13" stroke="#ccc" stroke-dasharray="1 2"/></svg></button><i class="caret"></i></div>
    <div class="seg w26"><button class="ib" aria-label="Dynamic input"><svg viewBox="0 0 16 16"><path d="M3 1v6M0 4h6" stroke="#3f94f4"/><path d="M6 8h9v5H6z" fill="#3f94f4"/></svg></button></div>
    <div class="seg w26 join"><button class="ib" aria-label="Ortho"><svg viewBox="0 0 16 16"><path d="M2.500 1v12.500H15M2.500 9.500h4v4" fill="none" stroke="#bbb" stroke-width="1.200"/></svg></button></div>
    <div class="seg w38 join"><button class="ib" aria-label="Polar tracking"><svg viewBox="0 0 16 16"><path d="M13 10A6 6 0 1 1 11 3M7 8h8M7 8l5-6M11 1q3 3 2 7" fill="none" stroke="#bbb"/></svg></button><i class="caret"></i></div>
    <div class="seg w38"><button class="ib" aria-label="Isometric drafting"><svg viewBox="0 0 16 16"><path d="M1 1l13 14M7.500 0v6M7.500 9v6" stroke="#bbb" stroke-width="1.200"/></svg></button><i class="caret"></i></div>
    <div class="seg w26 join"><button class="ib" aria-label="Object snap tracking"><svg viewBox="0 0 16 16"><path d="M14 2L3 13.500h12" fill="none" stroke="#3f94f4" stroke-width="1.500"/><path d="M1 12h3v3H1z" fill="#3f94f4"/></svg></button></div>
    <div class="seg w38"><button class="ib" aria-label="Object snap"><svg viewBox="0 0 16 16"><path d="M3.500 3.500h11v11h-11z" fill="none" stroke="#3f94f4" stroke-width="1.300"/><path d="M1 1h4v4H1z" fill="#1a8f1a"/></svg></button><i class="caret"></i></div>
    <div class="seg w26"><button class="ib" aria-label="Lineweight"><svg viewBox="0 0 16 16"><path d="M0 2.500h16" stroke="#bbb" stroke-width="2"/><path d="M0 6h10M0 10h16" stroke="#bbb" stroke-width="2"/><path d="M0 14h12" stroke="#bbb" stroke-width="3"/></svg></button></div>
    <div class="seg w26 join"><button class="ib" aria-label="Selection cycling"><svg viewBox="0 0 16 16"><path d="M3 1v6M0 4h6" stroke="#3f94f4"/><path d="M5 5h6v6H5z" fill="#2f74c4"/><path d="M7 8h7v7H7z" fill="#a4c48c"/></svg></button></div>
    <div class="seg w38"><button class="ib" aria-label="3D object snap"><svg viewBox="0 0 16 16"><path d="M3 5l5-3 6 3v7l-6 3-5-3zM3 5l5 3 6-3M8 8v7" fill="none" stroke="#3f94f4" stroke-width="1.300"/><path d="M1 1h4v4H1z" fill="#1a8f1a"/></svg></button><i class="caret"></i></div>
    <div class="seg w26"><button class="ib" aria-label="Dynamic UCS"><svg viewBox="0 0 16 16"><path d="M2.500 2v12H14M1 4l1.500-2L4 4M3 13L9 6M12 12l2 2-2 2M13 1l-4 6h4l-3 4" fill="none" stroke="#3f94f4" stroke-width="1.200"/></svg></button></div>
    <div class="seg w38"><button class="ib" aria-label="Selection filter"><svg viewBox="0 0 16 16"><path d="M2 5l6-3 6 3v7l-6 3-6-3zM2 5l6 3 6-3M8 8v7" fill="none" stroke="#bbb"/></svg></button><i class="caret"></i></div>
    <div class="seg w38"><button class="ib" aria-label="Gizmo"><svg viewBox="0 0 16 16"><path d="M8 2l6 3v7l-6 3-6-3V5z" fill="none" stroke="#bbb"/><circle cx="8" cy="8" r="1.500" fill="none" stroke="#ccc"/><path d="M6.500 0h3v3h-3z" fill="#3f94f4"/><path d="M13 11h3v3h-3z" fill="#e0321c"/><path d="M0 11h3v3H0z" fill="#58a618"/></svg></button><i class="caret"></i></div>
    <div class="seg scale">
      <button class="ib" aria-label="Annotation visibility"><svg viewBox="0 0 16 16"><path d="M4.500 4.500h10v10h-10zM7.500 7.500h5v5h-5z" fill="none" stroke="#bbb"/><path d="M1.500 15V1.500H15" stroke="#bbb" stroke-dasharray="2 1" fill="none"/><path d="M0 0h5L0 5z" fill="#bbb"/></svg></button>
      <button class="ib" aria-label="Annotation monitor"><svg viewBox="0 0 16 16"><path d="M6 3h2v4l8 8h-3l-5-4-5 4H0l6-6z" fill="#bbb"/><circle cx="11.500" cy="3" r="2.500" fill="none" stroke="#bbb"/></svg></button>
      <button class="ib" aria-label="Auto scale"><svg viewBox="0 0 16 16"><path d="M6 3h2v4l8 8h-3l-5-4-5 4H0l6-6z" fill="#bbb"/><path d="M13 0l-3 4h4l-3 4" fill="none" stroke="#bbb"/></svg></button>
      <button class="ib sm" aria-label="Viewport lock"><svg viewBox="0 0 16 16"><path d="M2.500 7.500h11v7h-11zM5 7V4q3-5 6 0v3M8 10v2" fill="none" stroke="#bbb" stroke-width="1.300"/></svg></button>
      <button class="ib sm" aria-label="Viewport maximise"><svg viewBox="0 0 16 16"><path d="M1.500 1.500h13v13h-13zM4.500 4.500h7v7h-7z" fill="none" stroke="#bbb" stroke-width="1.300"/><path d="M9 10h5l-2.500 3z" fill="#ccc"/></svg></button>
      <button class="value">0.026435<i class="caret"></i></button>
      <button class="ib sm sync" aria-label="Scale sync"><svg viewBox="0 0 16 16"><path d="M0 0h16v16H0z" fill="#1560c8"/><path d="M3 14V3h10M5 5l8 9M9 9l-5 6" stroke="#6cb0ff" stroke-width="1.500" fill="none"/></svg></button>
      <ul class="scale-menu">
        <li><button>Scale to fit</button></li><li><button>1:1</button></li><li><button>1:2</button></li><li><button>1:4</button></li><li><button>1:5</button></li><li><button>1:8</button></li><li><button>1:10</button></li><li><button>1:16</button></li><li><button>1:20</button></li><li><button>1:30</button></li><li><button>1:40</button></li><li><button>1:50</button></li><li><button>1:100</button></li><li><button>2:1</button></li><li><button>4:1</button></li><li><button>8:1</button></li><li><button>10:1</button></li><li><button>100:1</button></li><li><button>1/128" = 1'-0"</button></li><li><button>1/64" = 1'-0"</button></li><li><button>1/32" = 1'-0"</button></li><li><button>1/16" = 1'-0"</button></li><li><button>3/32" = 1'-0"</button></li><li><button>1/8" = 1'-0"</button></li><li><button>3/16" = 1'-0"</button></li>
      </ul>
    </div>
    <div class="seg w116"><button class="ib" aria-label="Workspace"><svg viewBox="0 0 16 16"><circle cx="8" cy="8" r="3.500" fill="none" stroke="#ccc" stroke-width="3"/><path d="M8 2v2M8 12v2M2 8h2M12 8h2M4 4l1 1M11 11l1 1M12 4l-1 1M4 12l1-1" stroke="#ccc" stroke-width="2"/></svg></button><button class="value">3D Modeling<i class="caret"></i></button></div>
    <div class="seg w26 join"><button class="ib" aria-label="Annotation monitor toggle"><svg viewBox="0 0 16 16"><path d="M8 1v14M1 8h14" stroke="#ccc" stroke-width="1.500"/></svg></button></div>
    <div class="seg w114"><button class="ib" aria-label="Units"><svg viewBox="0 0 16 16"><path d="M6 1h4v14H6z" fill="#bbb"/><path d="M8 3h2M8 6h2M8 9h2M8 12h2" stroke="#555"/></svg></button><button class="value">Architectural<i class="caret"></i></button></div>
    <div class="seg w42"><button class="ib" aria-label="Lock interface"><svg viewBox="0 0 16 16"><path d="M7 10.500H1.500v-9h12V6M1.500 3.500h12" fill="none" stroke="#ccc"/><path d="M7 9h6v6H7z" fill="#bbb"/><path d="M12 9V7q2-2 3 0v2" fill="none" stroke="#bbb"/></svg></button><i class="caret"></i></div>
    <div class="seg w26"><button class="ib" aria-label="Hardware acceleration"><svg viewBox="0 0 16 16"><circle cx="8" cy="8" r="7.500" fill="#1274d8" stroke="#0a4e9c"/><path d="M7 10l5-6" stroke="#8cf" stroke-width="1.500"/></svg></button></div>
    <div class="seg w26"><button class="ib" aria-label="Isolate objects"><svg viewBox="0 0 16 16"><path d="M2 1h9v8H2z" fill="#cfe4ff" stroke="#3a70b0"/><circle cx="6" cy="5" r="2" fill="#333"/><path d="M1 9h8v5H1z" fill="#ffd030"/><path d="M8 11l3 3 5-6" fill="none" stroke="#4fc020" stroke-width="2"/></svg></button></div>
    <div class="seg w50"><button class="ib" aria-label="Clean screen"><svg viewBox="0 0 16 16"><path d="M1 2.500h14v11H1z" fill="none" stroke="#ccc" stroke-width="1.300"/><path d="M9 5h4v4M13 5l-4 4M7 11.500H3.500V8M3.500 11.500L7 8" fill="none" stroke="#ccc"/></svg></button><button class="ib" aria-label="Customization"><svg viewBox="0 0 16 16"><path d="M1 3h14M1 8h14M1 13h14" stroke="#ccc" stroke-width="2"/></svg></button></div>
  </div>
</footer>
</body>
</html>
```
FILE: styles.css
```css
* { box-sizing: border-box; }
html, body { height: 100%; }
body {
  margin: 0;
  padding-bottom: 8px;
  display: flex;
  flex-direction: column;
  background: #262626;
  color: #f0f0f0;
  font: 11px/14px "Noto Sans", "Open Sans", sans-serif;
  overflow: hidden;
}
.defs { position: absolute; width: 0; height: 0; }
button {
  margin: 0;
  padding: 0;
  border: 0;
  background: none;
  color: inherit;
  font: inherit;
  white-space: nowrap;
}
svg { display: block; flex: none; }
.caret {
  flex: none;
  align-self: center;
  justify-self: center;
  display: inline-block;
  border: solid transparent;
  border-width: 3px 3px 0;
  border-top-color: #f0f0f0;
}
.caret.lg { border-width: 4px 4px 0; border-top-color: #f0f0f0; }
.caret.up { border-width: 0 4px 4px; border-bottom-color: #333; }

/* Ribbon */
.ribbon { flex: none; margin-right: 2px; background: #525252; border-bottom: 1px solid #8c8c8c; }
.ribbon-tabs { display: flex; gap: 1px; height: 19px; background: #4f4f4f; border-bottom: 1px solid #2e2e2e; }
.app-button { width: 37px; height: 15px; margin-right: 4px; background: linear-gradient(#555, #777); border: solid #222; border-width: 0 1px 1px 0; }
.app-button svg { width: 36px; height: 14px; }
.rtab { padding: 0 10px 2px; height: 18px; color: #d8d8d8; }
.rtab.current { padding: 0 9px 2px; color: #fff; background: linear-gradient(#777, #5d5d5d); border: solid #888; border-width: 1px 1px 0; margin-top: 1px; }
.rtab.contextual { height: 16px; margin: 1px 0 0; padding: 0 8px; background: #626a70; border: 1px solid #2a6fa0; color: #fff; line-height: 13px; }
.collapse { display: flex; align-items: center; gap: 5px; margin-left: 22px; }
.panels { display: flex; height: 98px; background: #525252; }
.panel { flex: none; display: flex; flex-direction: column; border-right: 1px solid #3c3c3c; border-left: 1px solid #666; background: #5d5d5d; }
.panel .tools { flex: 1; display: flex; padding-top: 4px; }
.panel h2 {
  position: relative;
  display: flex;
  align-items: center;
  justify-content: center;
  gap: 7px;
  height: 19px;
  margin: 0;
  padding-bottom: 3px;
  background: #4b4b4b;
  font-size: 11px;
  font-weight: 400;
}
.launcher { position: absolute; right: 5px; width: 6px; height: 6px; }
.launcher.inline { position: static; }
.modeling { width: 184px; }
.mesh { width: 78px; }
.editing { width: 146px; }
.draw { width: 94px; }
.modify { width: 145px; }
.section { width: 76px; }
.coords { width: 145px; }
.views { width: 127px; }
.selection { width: 172px; }
.layers { width: 273px; }
.groups { width: 69px; }
.base { width: 61px; }

.big { display: flex; flex-direction: column; align-items: center; padding-top: 3px; width: 50px; text-align: center; line-height: 15px; }
.big svg { width: 30px; height: 30px; margin-bottom: 5px; }
.big .caret { margin-top: 3px; }
.modeling .big { width: 38px; }
.modeling .big + .big { width: 64px; }
.section .big { width: 100%; }
.selection .big { width: 48px; }
.selection .big + .big { width: 66px; }
.selection .gizmo { position: relative; }
.selection .big + .gizmo { width: 56px; }
.gizmo .caret { position: absolute; right: 2px; top: 50px; }
.layers .big { width: 62px; }
.groups .big { width: 42px; }
.base .big { width: 100%; }
.wide { display: flex; align-items: center; gap: 5px; height: 24px; }
.wide svg, .ib svg { width: 16px; height: 16px; }
.stack { display: flex; flex-direction: column; padding-left: 4px; }
.ib { display: flex; align-items: center; justify-content: center; width: 24px; height: 24px; flex: none; }
.ib.on { height: 22px; margin-top: 1px; background: #6d90c4; border: 1px solid #2f5488; }
.rows { display: grid; grid-auto-rows: 24px; align-content: start; }
.rows > .ib { justify-self: center; }
.mesh .one { grid-template-columns: 24px; }
.editing .rows { width: 100%; grid-template-columns: 28px 26px 24px 10px 1fr 14px; }
.editing .ib:nth-of-type(3n+1) { grid-column: 1; }
.editing .sep { grid-column: 3 / 6; padding-left: 4px; }
.draw .rows { grid-template-columns: 26px 26px 28px 10px; }
.modify .rows { grid-template-columns: 26px 28px 22px 32px 20px 16px; }
.coords .rows { grid-template-columns: 26px 10px 34px 22px 26px 22px; }
.world { grid-column: 3 / 7; margin-left: 4px; }
.views .rows { width: 122px; margin-left: 1px; }
.pair { display: flex; gap: 2px; }
.layers .rows { grid-template-columns: 24px 24px 24px 24px 24px 88px; }
.layer-drop { grid-column: 1 / 7; }
.layers .r3 { grid-column: 1; }
.match { grid-column: 5 / 7; padding-left: 3px; }
.drop {
  display: flex;
  align-items: center;
  gap: 3px;
  height: 22px;
  margin-top: 1px;
  padding: 0 3px 0 2px;
  background: linear-gradient(#606060, #6a6a6a);
  border: 1px solid #333;
}
.drop svg { width: 16px; height: 16px; }
.drop select { flex: 1; min-width: 0; appearance: none; border: 0; margin: 0; padding: 0; background: none; color: #f0f0f0; font: inherit; }
.drop.world { gap: 0; }
.swatch { width: 14px; height: 14px; margin: 0 2px; background: #f00; border: 1px solid #000; }

/* Drawing file tabs */
.file-tabs { flex: none; display: flex; align-items: flex-end; height: 29px; padding-left: 14px; margin-right: 2px; background: #363636; border-bottom: 4px solid #5c5c5c; }
.ftab {
  display: flex;
  align-items: center;
  justify-content: space-between;
  width: 128px;
  height: 22px;
  padding: 0 17px 0 14px;
  background: #545454;
  color: #b8b8b8;
  clip-path: polygon(0 100%, 3px 90%, 9px 15%, 13px 0, calc(100% - 13px) 0, calc(100% - 9px) 15%, calc(100% - 3px) 90%, 100% 100%);
}
.ftab.active { width: 130px; margin-left: -5px; background: linear-gradient(#868686, #666); color: #fff; }
.ftab svg { width: 8px; height: 8px; }
.fplus { display: grid; place-items: center; width: 22px; height: 15px; margin: 0 0 3px 4px; background: #505050; border-radius: 2px 10px 2px 10px; }
.fplus svg, .lplus svg { width: 8px; height: 8px; }

/* Drawing area */
.workspace { position: relative; flex: 1; min-height: 0; margin-right: 2px; background: #8a8a8a; overflow: hidden; }
.window-controls { display: flex; justify-content: flex-end; gap: 6px; padding: 8px 9px 0 0; }
.window-controls svg { width: 14px; height: 14px; }
.sheet { position: absolute; left: 240px; top: 167px; width: 843px; height: 560px; box-shadow: 0 0 9px #555; }
.sheet text { font-family: "Noto Sans", sans-serif; }
.frame { fill: none; stroke: #000; shape-rendering: crispEdges; }
.frame .margin { stroke: #999; stroke-dasharray: 5 3; }
.notes text { font-size: 4px; font-weight: 700; fill: #000; }
.vp { fill: none; stroke: #f00; shape-rendering: crispEdges; }
.sheet .vp.current { stroke-width: 3; }
.ucs { fill: none; stroke: #000; }
.sheet .vp-label { font: 12px "Open Sans", sans-serif; fill: #000; }
#plan, #plan *, #sofa2 path, #sofa3 path, #chair path { vector-effect: non-scaling-stroke; }
.grid-lines { fill: none; stroke: #0f0; stroke-dasharray: 8 1 2 1; shape-rendering: crispEdges; }
.bubbles { fill: none; stroke: #0f0; stroke-width: 1.3; }
.bubbles .dots { fill: #0f0; stroke: none; }
.dims { fill: none; stroke: #f00; shape-rendering: crispEdges; }
.dims .blob { fill: #f00; stroke: none; }
.partitions { fill: none; stroke: #ff0; stroke-width: 1.5; }
.walls { fill: none; stroke: #000; stroke-width: 1.2; }
.walls .solid { fill: #000; }
.walls .leaf { stroke: none; }
.stairs { fill: none; stroke: #5a3832; shape-rendering: crispEdges; }
.doors { fill: none; stroke: #00f; stroke-width: 1.2; }
.tags { fill: #f0f; }
.sheet .cube text { font: 700 8px "Liberation Sans", sans-serif; fill: #c4c4c4; text-anchor: middle; }
.cube circle { fill: none; stroke: #fafafa; stroke-width: 5; }
.cube rect { fill: #eee; stroke: #999; }
.cube .inner { fill: #e2e4e8; stroke: none; }
.sheet .cube .top { font-size: 5px; fill: #888; }
.cube .pill { fill: #e8e8f2; stroke: none; }
.sheet .cube .wcs { font-size: 11px; font-weight: 400; fill: #888; }
.cube path { fill: none; stroke: #bbb; }
.navbar { fill: none; stroke: #dadada; }
.navbar rect { fill: #e8e8e8; fill-opacity: .45; stroke: #b8b8b8; stroke-opacity: .8; stroke-width: 2; }
.navbar .fill { fill: #ccc; stroke: none; }

/* Command line */
.command { flex: none; display: flex; align-items: center; height: 26px; margin-right: 2px; padding-right: 4px; background: #dcdcdc; border-top: 1px solid #777; }
.command input { flex: 1; min-width: 0; border: 0; padding: 0; background: none; text-indent: -7px; font: italic 12px "Liberation Mono", monospace; }
.command input::placeholder { color: #909090; opacity: 1; }

/* Layout tabs and status bar */
.bottom { flex: none; display: flex; align-items: flex-start; height: 30px; margin-right: 2px; padding-right: 2px; background: #363636; border-top: 2px solid #6a6a6a; border-bottom: 1px solid #555; }
.layout-tabs { flex: 1; display: flex; padding-left: 4px; }
.ltab {
  height: 18px;
  padding: 0 15px 2px;
  background: #525252;
  color: #b8b8b8;
  clip-path: polygon(0 0, 3px 10%, 8px 85%, 11px 100%, calc(100% - 11px) 100%, calc(100% - 8px) 85%, calc(100% - 3px) 10%, 100% 0);
}
.ltab.active { margin-left: -5px; padding: 0 18px 2px; background: linear-gradient(#666, #8c8c8c); color: #fff; font-weight: 700; }
.lplus { display: grid; place-items: center; width: 22px; height: 17px; background: #505050; border-radius: 10px 2px 10px 2px; }
.chevrons { width: 8px; height: 12px; margin: 4px 11px 0 0; }
.status { flex: none; display: flex; gap: 1px; }
.seg { position: relative; flex: none; display: flex; align-items: center; justify-content: space-around; height: 25px; padding: 0 3px; background: #525252; border: 1px solid #828282; }
.seg.join, .seg.w64 { margin-left: -1px; }
.seg .ib { width: 18px; }
.seg .caret { border-width: 5px 4px 0; }
.coord { width: 153px; justify-content: flex-end; padding-right: 5px; font-size: 12px; }
.model { width: 49px; }
.w64 { width: 66px; }
.w26 { width: 25px; }
.w38 { width: 38px; }
.w42 { width: 42px; }
.w50 { width: 50px; }
.w114 { width: 113px; }
.w116 { width: 115px; }
.seg.scale { width: 195px; padding: 0; justify-content: flex-start; }
.scale .ib { width: 24px; }
.scale .sm { width: 18px; }
.scale .sync { margin-left: 3px; }
.value { display: flex; align-items: center; gap: 4px; font-size: 11px; }
.scale .value { font-size: 12px; }
.scale-menu {
  position: absolute;
  left: 86px;
  bottom: 24px;
  width: 119px;
  margin: 0;
  padding: 2px 0 0;
  list-style: none;
  background: #525252;
  border: 1px solid #777;
}
.scale-menu li { height: 24px; }
.scale-menu button { width: 100%; height: 24px; padding-left: 21px; text-align: left; font-weight: 600; }
```
